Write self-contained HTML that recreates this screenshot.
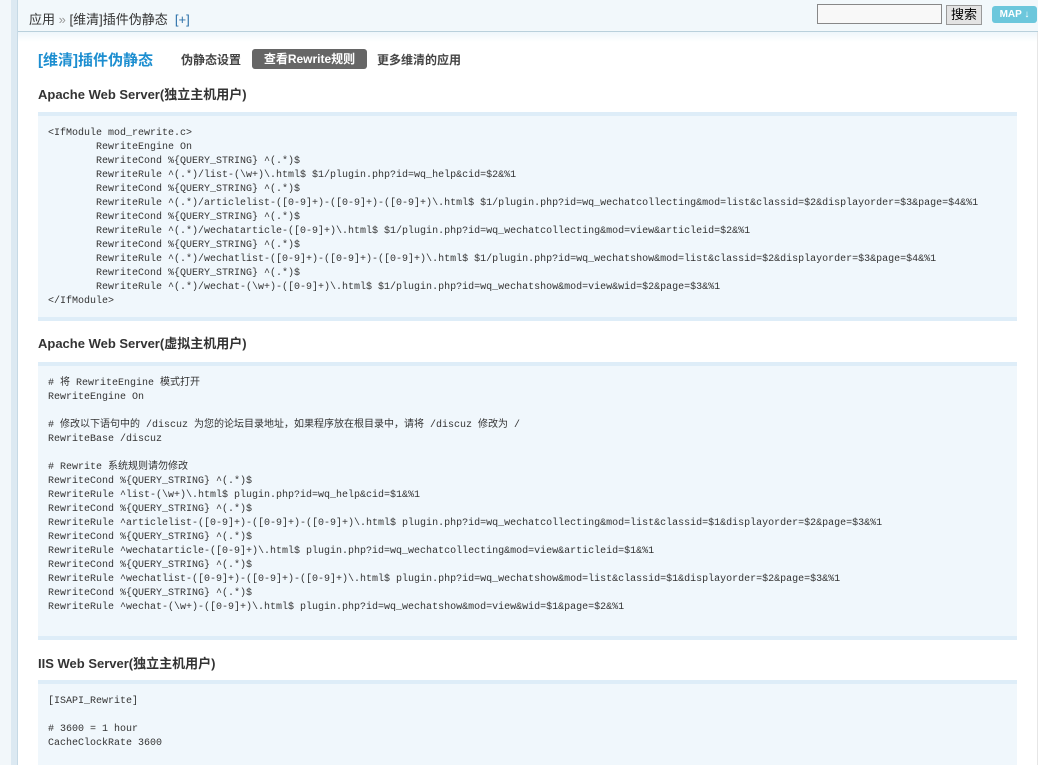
<!DOCTYPE html>
<html><head><meta charset="utf-8"><style>
html,body{margin:0;width:1038px;height:765px;overflow:hidden}
body{background:#fff;font-family:"Liberation Sans","Noto Sans CJK SC",sans-serif;position:relative}
.side{position:absolute;left:0;top:0;width:11px;height:765px;background:#f2f7fa}
.side2{position:absolute;left:11px;top:0;width:6px;height:765px;background:#dce9f2;border-right:1px solid #c6d9e5}
.top{position:absolute;left:18px;top:0;width:1020px;height:31px;background:#f2f8fb;border-bottom:1px solid #b9d0dc}
.topg{position:absolute;left:18px;top:32px;width:1020px;height:10px;background:linear-gradient(#eef6fb,#fff)}
.crumb{position:absolute;left:29px;top:9px;font-size:13px;color:#333}
.crumb .p{color:#2a6fa8}
.search{position:absolute;left:817px;top:4px;width:123px;height:18px;border:1px solid #888;background:#f8f8f8}
.btn{position:absolute;left:946px;top:5px;width:34px;height:18px;background:#e3e3e3;border:1px solid #999;font-size:13px;text-align:center;line-height:18px;color:#000}
.map{position:absolute;left:992px;top:6px;width:45px;height:17px;background:#6cc7dc;border-radius:3px;color:#fff;font-size:10px;font-weight:bold;line-height:17px;text-align:center}
.title{position:absolute;left:38px;top:49px;font-size:15px;color:#1c8ed0;font-weight:bold}
.nav{position:absolute;top:51px;font-size:12px;font-weight:bold;color:#444}
.act{position:absolute;left:252px;top:49px;width:115px;height:20px;background:#666;border-radius:3px;color:#fff;font-size:12px;font-weight:bold;line-height:20px;text-align:center}
h3{position:absolute;left:38px;margin:0;font-size:13px;font-weight:bold;color:#333}
.blk{position:absolute;left:38px;width:979px;background:#f0f7fc;border-top:4px solid #deedf8;border-bottom:4px solid #deedf8}
pre{margin:0;padding:11px 0 0 10px;font-family:"Liberation Mono","Noto Sans CJK SC",monospace;font-size:10px;line-height:14px;color:#333}
.rl{position:absolute;left:1037px;top:32px;width:1px;height:733px;background:#e6e6e6}
</style></head><body>
<div class="side"></div><div class="side2"></div>
<div class="top"></div><div class="topg"></div>
<div class="crumb">应用 <span style="color:#999">»</span> [维清]插件伪静态 &nbsp;<span class="p">[+]</span></div>
<div class="search"></div><div class="btn">搜索</div><div class="map">MAP ↓</div>
<div class="rl"></div>
<div class="title">[维清]插件伪静态</div>
<div class="nav" style="left:181px">伪静态设置</div>
<div class="act">查看Rewrite规则</div>
<div class="nav" style="left:377px">更多维清的应用</div>

<h3 style="top:84px">Apache Web Server(独立主机用户)</h3>
<div class="blk" style="top:112px;height:201px"><pre>&lt;IfModule mod_rewrite.c&gt;
        RewriteEngine On
        RewriteCond %{QUERY_STRING} ^(.*)$
        RewriteRule ^(.*)/list-(\w+)\.html$ $1/plugin.php?id=wq_help&amp;cid=$2&amp;%1
        RewriteCond %{QUERY_STRING} ^(.*)$
        RewriteRule ^(.*)/articlelist-([0-9]+)-([0-9]+)-([0-9]+)\.html$ $1/plugin.php?id=wq_wechatcollecting&amp;mod=list&amp;classid=$2&amp;displayorder=$3&amp;page=$4&amp;%1
        RewriteCond %{QUERY_STRING} ^(.*)$
        RewriteRule ^(.*)/wechatarticle-([0-9]+)\.html$ $1/plugin.php?id=wq_wechatcollecting&amp;mod=view&amp;articleid=$2&amp;%1
        RewriteCond %{QUERY_STRING} ^(.*)$
        RewriteRule ^(.*)/wechatlist-([0-9]+)-([0-9]+)-([0-9]+)\.html$ $1/plugin.php?id=wq_wechatshow&amp;mod=list&amp;classid=$2&amp;displayorder=$3&amp;page=$4&amp;%1
        RewriteCond %{QUERY_STRING} ^(.*)$
        RewriteRule ^(.*)/wechat-(\w+)-([0-9]+)\.html$ $1/plugin.php?id=wq_wechatshow&amp;mod=view&amp;wid=$2&amp;page=$3&amp;%1
&lt;/IfModule&gt;</pre></div>

<h3 style="top:333px">Apache Web Server(虚拟主机用户)</h3>
<div class="blk" style="top:362px;height:270px"><pre># 将 RewriteEngine 模式打开
RewriteEngine On

# 修改以下语句中的 /discuz 为您的论坛目录地址，如果程序放在根目录中，请将 /discuz 修改为 /
RewriteBase /discuz

# Rewrite 系统规则请勿修改
RewriteCond %{QUERY_STRING} ^(.*)$
RewriteRule ^list-(\w+)\.html$ plugin.php?id=wq_help&amp;cid=$1&amp;%1
RewriteCond %{QUERY_STRING} ^(.*)$
RewriteRule ^articlelist-([0-9]+)-([0-9]+)-([0-9]+)\.html$ plugin.php?id=wq_wechatcollecting&amp;mod=list&amp;classid=$1&amp;displayorder=$2&amp;page=$3&amp;%1
RewriteCond %{QUERY_STRING} ^(.*)$
RewriteRule ^wechatarticle-([0-9]+)\.html$ plugin.php?id=wq_wechatcollecting&amp;mod=view&amp;articleid=$1&amp;%1
RewriteCond %{QUERY_STRING} ^(.*)$
RewriteRule ^wechatlist-([0-9]+)-([0-9]+)-([0-9]+)\.html$ plugin.php?id=wq_wechatshow&amp;mod=list&amp;classid=$1&amp;displayorder=$2&amp;page=$3&amp;%1
RewriteCond %{QUERY_STRING} ^(.*)$
RewriteRule ^wechat-(\w+)-([0-9]+)\.html$ plugin.php?id=wq_wechatshow&amp;mod=view&amp;wid=$1&amp;page=$2&amp;%1</pre></div>

<h3 style="top:653px">IIS Web Server(独立主机用户)</h3>
<div class="blk" style="top:680px;height:81px;border-bottom:none"><pre>[ISAPI_Rewrite]

# 3600 = 1 hour
CacheClockRate 3600</pre></div>
</body></html>
